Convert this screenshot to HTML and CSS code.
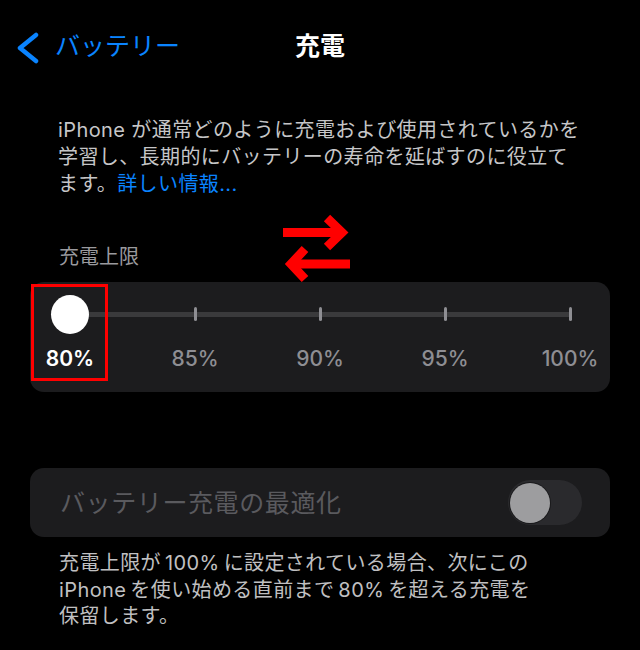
FILE: index.html
```html
<!DOCTYPE html>
<html lang="ja">
<head>
<meta charset="utf-8">
<link rel="stylesheet" href="styles.css">
</head>
<body>
<div class="screen">
  <header class="nav">
    <div class="back">
      <svg class="chevron" width="28" height="32" viewBox="0 0 28 32"><polyline points="22,3 6,16 22,29" fill="none" stroke="#0a84ff" stroke-width="4.5" stroke-linecap="round" stroke-linejoin="round"/></svg>
      <span class="back-text">バッテリー</span>
    </div>
    <h1 class="title">充電</h1>
    <div></div>
  </header>

  <p class="desc">iPhone が通常どのように充電および使用されているかを<br>学習し、長期的にバッテリーの寿命を延ばすのに役立て<br>ます。<a class="link">詳しい情報...</a></p>

  <div class="label-row">
    <span>充電上限</span>
    <svg class="arrows" width="75" height="72" viewBox="0 0 75 72">
      <line x1="3" y1="20.5" x2="60" y2="20.5" stroke="#ff0000" stroke-width="9"/>
      <polyline points="47,6 62,20.5 47,35" fill="none" stroke="#ff0000" stroke-width="9" stroke-linejoin="miter"/>
      <line x1="12" y1="52" x2="70" y2="52" stroke="#ff0000" stroke-width="9"/>
      <polyline points="25,37 11,52 25,67" fill="none" stroke="#ff0000" stroke-width="9" stroke-linejoin="miter"/>
    </svg>
  </div>

  <div class="card slider-card">
    <div class="track">
      <div class="stop"><div class="thumb"></div></div>
      <div class="stop"><div class="tick"></div></div>
      <div class="stop"><div class="tick"></div></div>
      <div class="stop"><div class="tick"></div></div>
      <div class="stop"><div class="tick"></div></div>
    </div>
    <div class="pct-row">
      <span class="pct active">80%</span>
      <span class="pct">85%</span>
      <span class="pct">90%</span>
      <span class="pct">95%</span>
      <span class="pct">100%</span>
    </div>
    <div class="highlight"></div>
  </div>

  <div class="card toggle-card">
    <span class="toggle-label">バッテリー充電の最適化</span>
    <div class="switch"><div class="knob"></div></div>
  </div>

  <p class="footer">充電上限が 100% に設定されている場合、次にこの<br>iPhone を使い始める直前まで 80% を超える充電を<br>保留します。</p>
</div>
</body>
</html>
```
FILE: styles.css
```css
* { box-sizing: border-box; }
html, body {
  margin: 0;
  padding: 0;
  background: #000;
}
body {
  font-family: "Inter", "Noto Sans CJK JP", sans-serif;
  color: #fff;
}
.screen {
  width: 640px;
  height: 650px;
  overflow: hidden;
}
.nav {
  height: 92px;
  display: grid;
  grid-template-columns: 1fr auto 1fr;
  align-items: center;
}
.back {
  display: flex;
  align-items: center;
  padding-left: 14px;
}
.chevron {
  display: block;
  margin-top: 4px;
}
.back-text {
  margin-left: 13px;
  font-size: 25px;
  line-height: 32px;
  color: #0a84ff;
}
.title {
  margin: 0;
  font-size: 25px;
  font-weight: 700;
  line-height: 32px;
  color: #fff;
}
.desc {
  margin: 25px 0 0;
  padding-left: 58px;
  font-size: 20px;
  line-height: 27px;
  letter-spacing: 0.4px;
  color: #c6c6c8;
  white-space: nowrap;
}
.link {
  color: #0a84ff;
}
.label-row {
  position: relative;
  margin-top: 46px;
  padding-left: 59px;
  font-size: 20px;
  line-height: 27px;
  color: #9a9a9e;
}
.arrows {
  position: absolute;
  left: 280px;
  top: -32px;
}
.card {
  background: #1c1c1e;
  border-radius: 14px;
  margin: 0 30px;
}
.slider-card {
  position: relative;
  margin-top: 11px;
  height: 110px;
  padding-top: 12px;
}
.track {
  margin: 0 40px;
  height: 40px;
  display: flex;
  justify-content: space-between;
  background: linear-gradient(#3a3a3c, #3a3a3c) center / 100% 5px no-repeat;
}
.stop {
  width: 0;
  display: flex;
  justify-content: center;
  align-items: center;
}
.thumb {
  flex-shrink: 0;
  width: 38px;
  height: 39px;
  border-radius: 50%;
  background: #fff;
}
.tick {
  flex-shrink: 0;
  width: 3px;
  height: 14px;
  border-radius: 1.5px;
  background: #8e8e93;
}
.pct-row {
  margin-top: 12px;
  padding-left: 5px;
  display: grid;
  grid-template-columns: repeat(5, 70px);
  column-gap: 55px;
}
.pct {
  text-align: center;
  font-size: 21px;
  line-height: 25px;
  font-weight: 500;
  color: #8e8e93;
}
.pct.active {
  color: #fff;
  font-weight: 600;
}
.highlight {
  position: absolute;
  left: 1px;
  top: 2px;
  width: 77px;
  height: 97px;
  border: 3px solid #ff0000;
}
.toggle-card {
  margin-top: 76px;
  height: 69px;
  display: flex;
  align-items: center;
  justify-content: space-between;
  padding: 0 28px 0 30px;
}
.toggle-label {
  font-size: 25px;
  line-height: 32px;
  letter-spacing: 0.6px;
  color: #5a5a5e;
}
.switch {
  width: 74px;
  height: 45px;
  border-radius: 23px;
  background: #2a2a2d;
  display: flex;
  align-items: center;
  padding-left: 2px;
}
.knob {
  width: 40px;
  height: 40px;
  border-radius: 50%;
  background: #9d9d9f;
  box-shadow: 0 0 0 1px #1a1a1c;
}
.footer {
  margin: 13px 0 0;
  padding-left: 59px;
  font-size: 20px;
  line-height: 26.5px;
  letter-spacing: 0.4px;
  word-spacing: -2px;
  color: #c0c0c2;
  white-space: nowrap;
}
```
